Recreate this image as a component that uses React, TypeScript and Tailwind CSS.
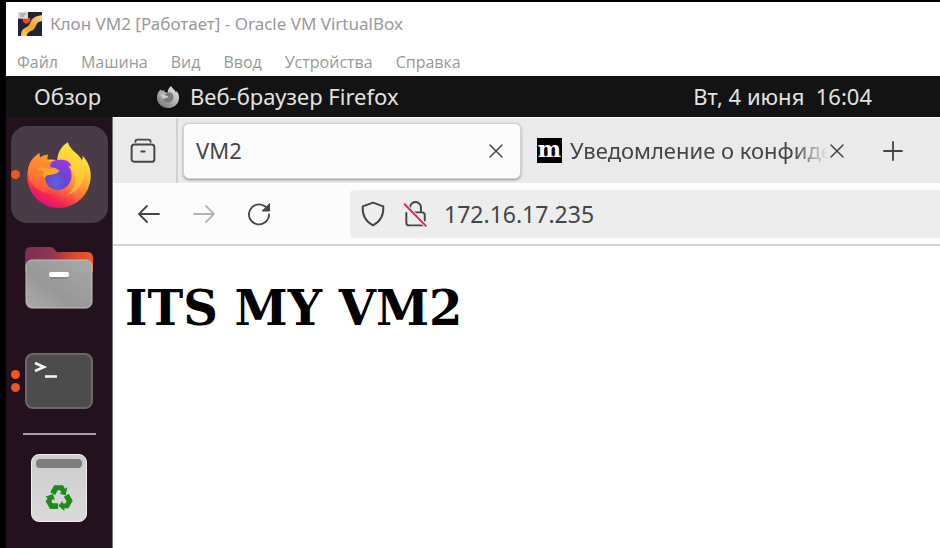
import type { ReactNode } from "react";

const menuItems = ["Файл", "Машина", "Вид", "Ввод", "Устройства", "Справка"];

function VirtualBoxIcon() {
  return (
    <svg viewBox="0 0 72 72" className="size-6 shrink-0" aria-hidden="true">
      <defs>
        <linearGradient id="vb-ribbon" x1="1" y1="0" x2="0" y2="1">
          <stop offset="0" stopColor="#f9d896" />
          <stop offset="0.5" stopColor="#f3a52c" />
          <stop offset="1" stopColor="#f8cb6c" />
        </linearGradient>
      </defs>
      <rect width="72" height="72" fill="#23242f" />
      <path d="M72 10v18c-8 0-13 3-17 10-4 8-6 15-16 19-8 3-11 6-13 15H9c1-14 3-19 12-24 9-4 12-8 16-16C42 18 54 11 72 10z" fill="url(#vb-ribbon)" />
      <path d="M13 18h24c1 10-4 17-12 17-7 0-12-6-12-17z" fill="#e2501b" />
      <rect width="30" height="20" fill="#d9d9dc" />
      <path d="M6 6h18M6 12h12" stroke="#8f9098" strokeWidth="3" />
    </svg>
  );
}

function FirefoxIcon() {
  return (
    <svg viewBox="78 88 200 204" className="h-[68px] w-[66px]" aria-hidden="true">
      <defs>
        <linearGradient id="fx-body" x1="0.85" y1="0.1" x2="0.4" y2="1">
          <stop offset="0" stopColor="#fff04a" />
          <stop offset="0.35" stopColor="#ffbd33" />
          <stop offset="0.65" stopColor="#ff7139" />
          <stop offset="0.87" stopColor="#f5264f" />
          <stop offset="1" stopColor="#e0127f" />
        </linearGradient>
        <linearGradient id="fx-head" x1="0" y1="0" x2="0" y2="1">
          <stop offset="0" stopColor="#ff8f2a" />
          <stop offset="0.6" stopColor="#ff7a30" />
          <stop offset="1" stopColor="#ff4f45" />
        </linearGradient>
        <radialGradient id="fx-globe" cx="0.4" cy="0.75" r="0.75">
          <stop offset="0" stopColor="#5866e0" />
          <stop offset="0.5" stopColor="#6a45d0" />
          <stop offset="1" stopColor="#9636e8" />
        </radialGradient>
      </defs>
      <path d="M205 91c4 16 15 25 28 36 7 6 11 12 14 19 3-5 3-10 2-14 16 15 27 40 25 65-3 53-45 93-96 93s-95-41-96-94c-1-30 10-56 37-73-1 6 0 10 2 14 7-5 15-8 24-8-3 5-3 10-2 15 10-2 20-1 30 2 1-22 11-42 32-55z" fill="url(#fx-body)" />
      <path d="M119 123c-1 6 0 10 2 14 7-5 15-8 24-8-3 5-3 10-2 17 12 2 22 8 30 18-16 4-36 16-36 34 0 24 18 42 42 44-50 14-92-16-94-60-1-26 10-45 36-59z" fill="url(#fx-head)" opacity=".8" />
      <path d="M158 149c20-9 45-7 53 3 3 4 5 8 4 13l-10-4c8 8 12 20 11 33-1 23-17 40-38 41-24 1-41-15-42-36 0-9 4-14 14-15 14-1 22-3 28-8-8-6-17-9-26-10-2-7 0-13 6-17z" fill="url(#fx-globe)" />
      <path d="M108 174c10-10 27-7 38-3 11 4 22 6 34 6-5 8-15 11-26 12-12 1-16 3-17 9-8-5-10-13-2-17-10-5-17-7-27-7z" fill="#ffa52b" />
      <path d="M205 91c4 16 15 25 28 36 22 19 24 48 18 74-7 25-25 42-47 49 18-14 27-36 22-57-3-14-7-21-21-32l10 4c-2-15-21-24-42-20 1-22 11-42 32-54z" fill="#ffd93b" opacity=".55" />
    </svg>
  );
}

function SmallFirefoxIcon() {
  return (
    <svg viewBox="0 0 66 66" className="size-[22px]" aria-hidden="true">
      <defs>
        <linearGradient id="fx-grey" x1="1" y1="0" x2="0.2" y2="1">
          <stop offset="0" stopColor="#efefef" />
          <stop offset="0.6" stopColor="#adadad" />
          <stop offset="1" stopColor="#757575" />
        </linearGradient>
      </defs>
      <path d="M43 0c2 8 12 11 14 20l2-5c5 7 7 13 7 20 0 18-15 31-33 31S0 52 0 35c0-11 4-20 13-25v6c3-2 6-3 9-3v6c4-1 7 0 10 1 0-8 3-15 11-20z" fill="url(#fx-grey)" />
      <path d="M32 20c11-3 18 4 17 14s-8 17-18 16c-8-1-12-6-12-12 5-1 11 0 15-5-4-2-7-4-11-3 1-5 4-8 9-10z" fill="#7a7a7a" />
      <path d="M9 27c8-4 14 2 25 4-3 6-11 3-14 8-3-4-5-8-11-12z" fill="#cfcfcf" />
    </svg>
  );
}

function FilesIcon() {
  return (
    <svg viewBox="0 0 68 62" className="h-[62px] w-[68px]" aria-hidden="true">
      <defs>
        <linearGradient id="files-back">
          <stop offset="0" stopColor="#7d2c5a" />
          <stop offset="0.4" stopColor="#943550" />
          <stop offset="0.7" stopColor="#d04a32" />
          <stop offset="1" stopColor="#ee5a24" />
        </linearGradient>
        <linearGradient id="files-front" x1="1" y1="0" x2="0" y2="1">
          <stop offset="0" stopColor="#a9a9a9" />
          <stop offset="0.6" stopColor="#989898" />
          <stop offset="1" stopColor="#acacac" />
        </linearGradient>
      </defs>
      <path d="M0 25V6q0-6 6-6h19q3 0 5 3t5 2h27q6 0 6 6v14z" fill="url(#files-back)" />
      <rect x="1" y="13" width="66" height="48" rx="6" fill="url(#files-front)" stroke="#c1c1c1" />
      <rect x="24" y="25" width="20" height="5" rx="2" fill="#fff" />
      <path d="M25 31h18" stroke="#777" />
    </svg>
  );
}

function TerminalIcon() {
  return (
    <svg viewBox="0 0 68 56" className="h-14 w-[68px]" aria-hidden="true">
      <rect x="1" y="1" width="66" height="54" rx="7" fill="#4c4c4c" stroke="#696969" strokeWidth="2" />
      <path d="M10 10l9 4-9 4" fill="none" stroke="#f4f4f4" strokeWidth="2.6" />
      <path d="M20 23.500h12" stroke="#f4f4f4" strokeWidth="2.6" />
    </svg>
  );
}

const recycleArm = "M61 84V101H37L24 78L30 68L23 64L46 56L52 75L46 71L41 78L45 84Z";

function TrashIcon() {
  return (
    <span className="flex h-[68px] w-14 flex-col items-center rounded-lg border border-[#efefef] bg-linear-to-b from-[#cdcdcd] to-[#dadada] pt-1">
      <span className="h-[9px] w-[46px] rounded bg-[#7d7d7d]" />
      <svg viewBox="22 26 84 84" className="mt-4 size-7" fill="#1f8a1c" aria-hidden="true">
        <path d={recycleArm} />
        <path d={recycleArm} transform="rotate(120 64 69)" />
        <path d={recycleArm} transform="rotate(240 64 69)" />
      </svg>
    </span>
  );
}

function DockButton({ label, windows = 0, active = false, children }: { label: string; windows?: number; active?: boolean; children: ReactNode }) {
  return (
    <button
      type="button"
      aria-label={label}
      className={`relative flex h-[97px] w-[97px] shrink-0 items-center justify-center rounded-2xl ${active ? "bg-[#493c46]" : ""}`}
    >
      <span className="absolute inset-y-0 left-0 flex flex-col items-center justify-center gap-1">
        {Array.from({ length: windows }, (_, i) => (
          <span key={i} className="size-[9px] rounded-full bg-[#ee5622]" />
        ))}
      </span>
      {children}
    </button>
  );
}

function Dock() {
  return (
    <nav aria-label="Dock" className="flex w-[107px] shrink-0 flex-col items-center border-r border-[#77707a] bg-[#23121d] pt-[9px]">
      <div className="flex flex-col gap-1.5">
        <DockButton label="Firefox" windows={1} active><FirefoxIcon /></DockButton>
        <DockButton label="Файлы"><FilesIcon /></DockButton>
        <DockButton label="Терминал" windows={2}><TerminalIcon /></DockButton>
      </div>
      <hr className="my-1 w-[73px] border-t-2 border-[#aa9fa9]" />
      <DockButton label="Корзина"><TrashIcon /></DockButton>
    </nav>
  );
}

function LineIcon({ className, children }: { className: string; children: ReactNode }) {
  return (
    <svg viewBox="0 0 24 24" fill="none" stroke="currentColor" strokeWidth="1.8" strokeLinecap="round" strokeLinejoin="round" className={className} aria-hidden="true">
      {children}
    </svg>
  );
}

function CloseIcon() {
  return (
    <LineIcon className="size-6"><path d="M6 6l12 12M18 6L6 18" strokeWidth="1.5" /></LineIcon>
  );
}

function TabBar() {
  return (
    <div className="flex h-[66px] items-center border-t border-white bg-[#eaeaea] text-[#454545]">
      <button type="button" aria-label="Недавний просмотр" className="flex h-full w-[65px] shrink-0 items-center justify-center border-r-2 border-[#cfcfcf] pr-1">
        <LineIcon className="size-[26px]">
          <rect x="1.500" y="6" width="21" height="16" rx="2.500" />
          <path d="M5 3.500C5 2 6 1.500 7 1.500h10c1 0 2 .5 2 2M10.500 12.500h3" />
        </LineIcon>
      </button>
      <div role="tablist" className="flex min-w-0 items-center pl-[5px]">
        <div className="flex h-14 w-[338px] shrink-0 items-center justify-between rounded-md border border-[#d2d2d2] bg-[#fcfcfc] px-3 shadow-sm shadow-black/30">
          <button type="button" role="tab" aria-selected="true" className="grow text-left">VM2</button>
          <button type="button" aria-label="Закрыть вкладку VM2"><CloseIcon /></button>
        </div>
        <div className="ml-4 flex w-[312px] items-center">
          <button type="button" role="tab" aria-selected="false" className="flex shrink-0 items-center gap-2">
            <span className="flex size-[25px] shrink-0 items-center justify-center bg-black pb-1 font-['DejaVu_Serif',serif] text-[22px] leading-5 font-bold text-white">m</span>
            <span className="mask-r-from-85% mask-r-to-98% whitespace-nowrap">Уведомление о конфиде</span>
          </button>
          <button type="button" aria-label="Закрыть вкладку" className="-ml-2 shrink-0"><CloseIcon /></button>
        </div>
      </div>
      <button type="button" aria-label="Новая вкладка" className="ml-8 shrink-0">
        <LineIcon className="size-6"><path d="M12 3v18M3 12h18" /></LineIcon>
      </button>
    </div>
  );
}

function Toolbar() {
  return (
    <div className="flex h-[63px] items-center border-b-2 border-[#d3d3d3] bg-[#fcfcfc] pt-px pl-6 text-[#454545]">
      <div className="flex w-[213px] shrink-0 gap-[31px]">
        <button type="button" aria-label="Назад">
          <LineIcon className="size-6"><path d="M22 12H2M10 4l-8 8 8 8" /></LineIcon>
        </button>
        <button type="button" aria-label="Вперёд" className="text-[#b5b5b5]">
          <LineIcon className="size-6"><path d="M2 12h20M14 4l8 8-8 8" /></LineIcon>
        </button>
        <button type="button" aria-label="Обновить">
          <LineIcon className="size-6">
            <path d="M22 12.500A10 10 0 1 1 18.500 4.800" />
            <path d="M22.500 2v7h-7z" fill="currentColor" strokeWidth="1" />
          </LineIcon>
        </button>
      </div>
      <div className="flex h-12 min-w-0 grow items-center gap-4 rounded-l bg-[#ededed] pl-2.5">
        <button type="button" aria-label="Защита" className="shrink-0">
          <LineIcon className="size-[26px]"><path d="M12 1.500l9.500 3.500c.5 8-2.500 14-9.500 17.500C5 19 2 13 2.500 5z" /></LineIcon>
        </button>
        <button type="button" aria-label="Соединение не защищено" className="shrink-0">
          <LineIcon className="size-[26px]">
            <path d="M7.500 5.500a5 5 0 0 1 10 1V10.500M4 11V20q0 2.500 2.500 2.500H20M11 10.500h7.500q2.500 0 2.500 2.500V18" />
            <path d="M2.500 3L22 23" stroke="#ededed" strokeWidth="3.500" />
            <path d="M2.500 3L22 23" stroke="#e22850" />
          </LineIcon>
        </button>
        <input aria-label="Адрес" defaultValue="172.16.17.235" className="min-w-0 grow bg-transparent text-[23px] outline-none" />
      </div>
    </div>
  );
}

export default function App() {
  return (
    <div className="flex min-h-screen flex-col border-t-2 border-l-6 border-black bg-white font-['Noto_Sans',sans-serif]">
      <header className="font-['Open_Sans',sans-serif] text-[#999]">
        <div className="flex h-11 items-center gap-2 pl-3 font-['Noto_Sans',sans-serif] text-[17px]">
          <VirtualBoxIcon />
          <span>Клон VM2 [Работает] - Oracle VM VirtualBox</span>
        </div>
        <nav aria-label="Меню" className="flex h-[30px] items-center gap-[23px] pt-px pl-[11px] text-base">
          {menuItems.map((item) => (
            <button key={item} type="button">{item}</button>
          ))}
        </nav>
      </header>
      <div className="flex h-[41px] items-center bg-[#131313] text-[22px] text-[#e2e2e2]">
        <button type="button" className="w-[151px] shrink-0 pl-7 text-left">Обзор</button>
        <button type="button" className="flex shrink-0 items-center gap-[11px]">
          <SmallFirefoxIcon />
          Веб-браузер Firefox
        </button>
        <button type="button" className="mr-[68px] ml-auto shrink-0 whitespace-pre">Вт, 4 июня  16:04</button>
      </div>
      <div className="flex grow">
        <Dock />
        <section className="min-w-0 grow text-[22px]">
          <TabBar />
          <Toolbar />
          <main className="px-3 pt-8">
            <h1 className="font-['DejaVu_Serif',serif] text-5xl leading-[60px] font-bold text-black">ITS MY VM2</h1>
          </main>
        </section>
      </div>
    </div>
  );
}
